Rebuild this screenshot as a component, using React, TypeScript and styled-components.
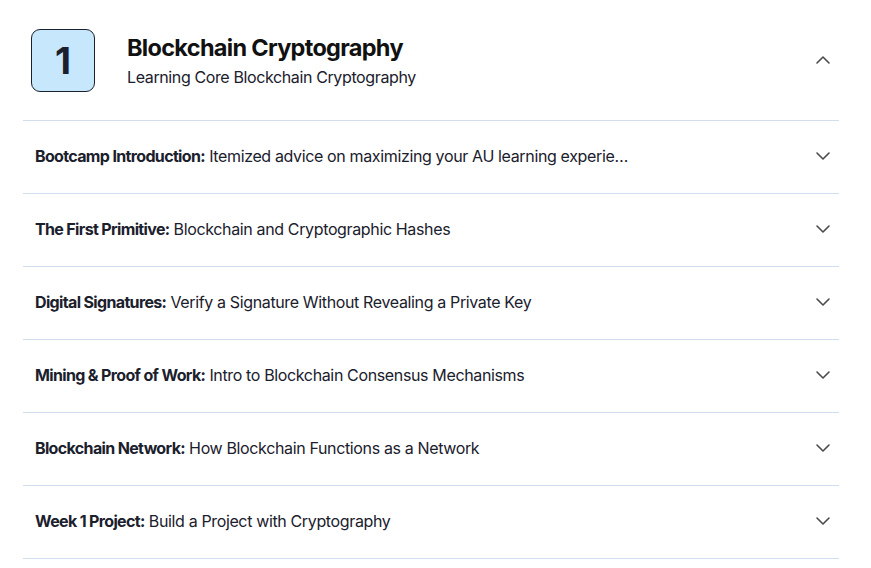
import React from "react";
import styled, { createGlobalStyle } from "styled-components";

const Global = createGlobalStyle`
  html, body { margin: 0; padding: 0; background: #ffffff; }
  body { font-family: Inter, "Noto Sans", Arial, sans-serif; color: #1a202c; }
`;

const Page = styled.div`
  padding: 0 32px 0 23px;
  width: 816px;
`;

const Header = styled.div`
  display: flex;
  align-items: center;
  height: 121px;
  padding: 0 8px;
  box-sizing: border-box;
  border-bottom: 1px solid #d3ddf0;
`;

const Badge = styled.div`
  width: 64px;
  height: 63px;
  box-sizing: border-box;
  border: 1px solid #1a202c;
  border-radius: 9px;
  background: #c6e7fc;
  display: flex;
  align-items: center;
  justify-content: center;
  font-size: 37px;
  font-weight: 700;
  color: #1a202c;
  flex-shrink: 0;
`;

const TitleBlock = styled.div`
  margin-left: 32px;
  flex: 1;
  display: flex;
  flex-direction: column;
  gap: 4px;
  margin-top: 1px;
`;

const Title = styled.div`
  font-size: 23.5px;
  font-weight: 700;
  letter-spacing: -0.7px;
  line-height: 28px;
  color: #111111;
`;

const Subtitle = styled.div`
  font-size: 16px;
  line-height: 22px;
  letter-spacing: -0.38px;
  color: #1a202c;
`;

const Row = styled.div`
  display: flex;
  align-items: center;
  height: 73px;
  box-sizing: border-box;
  padding: 0 8px 2px 12px;
  border-bottom: 1px solid #d3ddf0;
`;

const RowText = styled.div`
  flex: 1;
  font-size: 16px;
  line-height: 22px;
  letter-spacing: -0.36px;
  white-space: nowrap;
  overflow: hidden;
  text-overflow: ellipsis;
  max-width: 598px;
  margin-right: auto;
  color: #1a202c;
`;

const Strong = styled.span`
  font-weight: 700;
  letter-spacing: -0.65px;
`;

const Icon = styled.svg`
  width: 16px;
  height: 16px;
  flex-shrink: 0;
  margin-left: auto;
`;

const Chevron = ({ up }: { up?: boolean }) => (
  <Icon viewBox="0 0 16 16" fill="none">
    <path
      d={up ? "M2 11L8 5L14 11" : "M2 5L8 11L14 5"}
      stroke="#4a4a4a"
      strokeWidth="1.6"
      strokeLinecap="round"
      strokeLinejoin="round"
    />
  </Icon>
);

const items = [
  ["Bootcamp Introduction:", "Itemized advice on maximizing your AU learning experience and getting the most out of the bootcamp"],
  ["The First Primitive:", "Blockchain and Cryptographic Hashes"],
  ["Digital Signatures:", "Verify a Signature Without Revealing a Private Key"],
  ["Mining & Proof of Work:", "Intro to Blockchain Consensus Mechanisms"],
  ["Blockchain Network:", "How Blockchain Functions as a Network"],
  ["Week 1 Project:", "Build a Project with Cryptography"],
];

export default function App() {
  return (
    <>
      <Global />
      <Page>
        <Header>
          <Badge>1</Badge>
          <TitleBlock>
            <Title>Blockchain Cryptography</Title>
            <Subtitle>Learning Core Blockchain Cryptography</Subtitle>
          </TitleBlock>
          <Chevron up />
        </Header>
        {items.map(([b, t]) => (
          <Row key={b}>
            <RowText>
              <Strong>{b}</Strong> {t}
            </RowText>
            <Chevron />
          </Row>
        ))}
      </Page>
    </>
  );
}
